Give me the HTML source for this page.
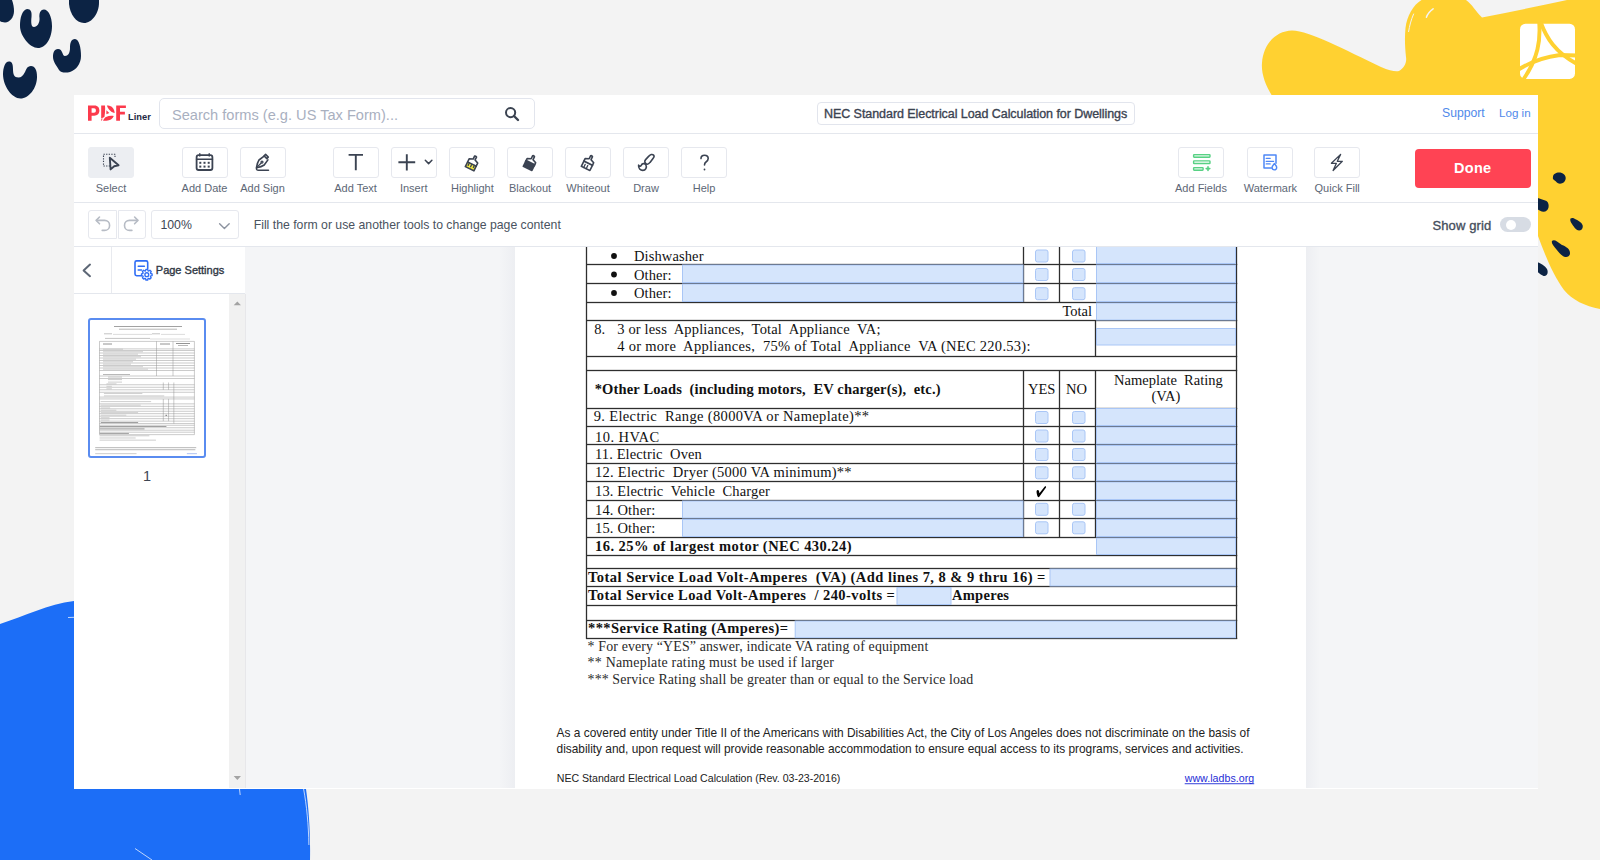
<!DOCTYPE html>
<html><head><meta charset="utf-8">
<style>
*{box-sizing:border-box;margin:0;padding:0}
html,body{width:1600px;height:860px;overflow:hidden;background:#f3f3f3;font-family:"Liberation Sans",sans-serif}
.abs{position:absolute}
#bg{position:absolute;left:0;top:0;width:1600px;height:860px}
#panel{position:absolute;left:74px;top:95px;width:1464px;height:694px;background:#fff;overflow:hidden}
.hline{position:absolute;height:1px;background:#e4e7ed}
.vline{position:absolute;width:1px;background:#e4e7ed}
.tb{position:absolute;top:52px;width:46px;height:31px;border:1px solid #e6e8ee;border-radius:3px;background:#fff}
.tb.sel{background:#eceef2;border-color:#eceef2}
.lbl{position:absolute;top:86px;font-size:11px;color:#5d6776;white-space:nowrap;text-align:center;line-height:14px}
.tb svg{position:absolute;left:0;top:0}
</style></head>
<body>
<!-- background blobs -->
<svg id="bg" width="1600" height="860" viewBox="0 0 1600 860">
  <g fill="#0c2344">
    <path d="M0,0 L12,0 C13.5,4 14,8 14,11 C14,17 10,22.4 5,22.4 C3,22.4 1,22 0,21 Z"/>
    <path d="M27,9 C22,10 20,18 20,26 C20,36 30,48 38,48 C46,48 52,38 52,26 C52,16 48,9.5 44,9.5 C40,9.5 39,14 39.5,18 C40,23 37,27 34,27 C31,27 31,22 31.5,17 C32,12 31,9 27,9 Z"/>
    <path d="M69,0 L69,4 C70,14 76,23 84,23 C92,23 99,13 99,3 L99,0 Z"/>
    <path d="M58,49 C54,49 53,53 53,57 C53,62 57,66 59,70 C61,73 66,73 70,72 C76,70 81,64 81,56 C81,48 79,39 75,39 C71,39 70,43 70,48 C70,53 68,56 65,56 C62,56 63,49 58,49 Z"/>
    <path d="M9,61.5 C5,61.5 3,68 3,74 C3,86 12,98.5 20.5,98.5 C29,98.5 37,88 37,77 C37,70 35,66 31,66 C27,66 26,70 25,72 C23,76 21,77.5 18.5,77.5 C14,77.5 13,74 13,69 C13,64 12,61.5 9,61.5 Z"/>
  </g>
  <!-- yellow blob -->
  <path fill="#ffd131" d="M1275,100 C1266,88 1261,74 1262,63 C1263,45 1275,31 1292,30.5 C1310,31 1345,50 1381,67 C1390,71 1396,72 1399,71 C1404,68 1407,63 1406,57 C1405,47 1404.5,38 1405.5,28 C1407,16 1413,5 1421.5,0 L1466,0 C1472,4 1476,12 1482,17.5 C1510,12 1540,6 1567,0 L1600,0 L1600,309 C1585,306 1572,300 1564,290 C1553,275 1545,255 1538,236 L1538,100 Z"/>
  <g fill="#0c2344">
    <path d="M1553,177 C1553,174 1556,172.4 1559,172.4 C1563,172.4 1565.7,175 1565.7,178 C1565.7,181.5 1563,183.7 1560,183.7 C1557,183.7 1556,181 1554,180 C1552.7,179 1552.7,178 1553,177 Z"/>
    <path d="M1536,197.5 C1541,199 1544,200 1546.5,201 C1548.5,202.5 1549,205 1548.5,207.5 C1548,210 1546,211.8 1543.5,211.8 C1541,211.8 1539.5,210 1536,209 Z"/>
    <path d="M1570.5,218.5 C1572,217.5 1574,218 1576,219.5 C1579,221 1582.5,223 1582.8,226 C1583,229 1581,230.5 1579,230.5 C1576.5,230.5 1574,227 1572,224 C1570.5,222 1569.8,220 1570.5,218.5 Z"/>
    <path d="M1552,241 C1553,239.8 1555,240 1557,241.5 L1562,245 C1566,246.5 1570,249 1570,253 C1570,256 1568,257.2 1565.5,257 C1562,256.5 1559.5,253 1556.5,249.5 C1554,246.5 1551,243 1552,241 Z"/>
    <path d="M1536,261.5 C1541,263 1545,266 1547,269 C1548.5,272 1547.5,276 1544.5,276 C1542,276 1540,273.5 1536,271 Z"/>
  </g>
  <!-- logo white square -->
  <rect x="1520" y="23.7" width="55" height="55.2" rx="5.5" fill="#fff"/>
  <g fill="none" stroke="#ffd131" stroke-width="3.9">
    <path d="M1539.2,22 C1540.6,40 1538.4,58 1523,80"/>
    <path d="M1540.6,22 C1546.4,38 1555,52 1577,64"/>
    <path d="M1518,70 C1530,62 1545,57 1560,55 L1577,55.5"/>
  </g>
  <!-- blue blob -->
  <path fill="#1c6ef7" d="M0,624 C25,616 48,604 74,601 L300,601 L306,789 C309,810 310.5,835 310,860 L0,860 Z"/>
  <g stroke="#fff" stroke-width="0.8" fill="none" opacity="0.9">
    <path d="M68,617.5 L74,617.3"/>
    <path d="M135,848.5 L152,860"/>
    <path d="M303.6,789 C306.6,805 308.6,825 308.9,845"/>
    <path d="M239.5,789 L240.2,795"/>
  </g>
  <g stroke="#f3f3f3" fill="none" stroke-linecap="round">
    <path d="M1413.6,14 C1411,20 1409.5,26 1408.6,31.6" stroke-width="1"/>
    <path d="M1433.1,8.8 C1430,11 1427.5,14 1426.4,17.2" stroke-width="1.5"/>
  </g>
</svg>

<div id="panel">
  <!-- header -->
  <div class="hline" style="left:0;top:38px;width:1464px"></div>
  <div class="hline" style="left:0;top:107px;width:1464px"></div>
  <div class="hline" style="left:0;top:151px;width:1464px"></div>
  <!-- search -->
  <div class="abs" style="left:85px;top:3px;width:376px;height:31px;border:1px solid #e2e5ed;border-radius:5px"></div>
  <div class="abs" style="left:98px;top:10.5px;font-size:14.6px;color:#a9b0bf;white-space:nowrap;line-height:18px">Search forms (e.g. US Tax Form)...</div>
  <svg class="abs" style="left:430px;top:11px" width="16" height="16" viewBox="0 0 16 16"><circle cx="6.6" cy="6.6" r="4.6" fill="none" stroke="#3b4351" stroke-width="2"/><path d="M10,10 L14,14" stroke="#3b4351" stroke-width="2.4" stroke-linecap="round"/></svg>
  <!-- title -->
  <div class="abs" style="left:743px;top:7px;width:318px;height:23px;border:1px solid #e2e5ed;border-radius:4px"></div>
  <div class="abs" style="left:750px;top:12px;font-size:12.5px;color:#3b4351;white-space:nowrap;line-height:14px;letter-spacing:-0.06px;-webkit-text-stroke:0.35px #3b4351">NEC Standard Electrical Load Calculation for Dwellings</div>
  <div class="abs" style="left:1368px;top:11.2px;font-size:12.2px;color:#5089ea;white-space:nowrap;line-height:14px">Support</div>
  <div class="abs" style="left:1425px;top:11.2px;font-size:11.6px;color:#5089ea;white-space:nowrap;line-height:14px">Log in</div>
  <!-- sidebar -->
  <div class="vline" style="left:36.6px;top:152px;height:46px;background:#e8eaef"></div>
  <div class="hline" style="left:0;top:198px;width:172px"></div>
  <div class="abs" style="left:155.3px;top:199px;width:16.2px;height:494px;background:#f1f1f1"></div>
  <div class="abs" style="left:81.8px;top:168.3px;font-size:11px;color:#2f3744;line-height:14px;white-space:nowrap;letter-spacing:0px;-webkit-text-stroke:0.35px #2f3744">Page Settings</div>
  <div class="abs" style="left:14px;top:222.8px;width:118px;height:140.6px;border:2px solid #5a8cf0;border-radius:3px;background:#fff"></div>
  <div class="abs" style="left:66px;top:373px;width:14px;text-align:center;font-size:14.5px;color:#3d4553;line-height:16px">1</div>
  <!-- doc area -->
  <div class="abs" style="left:171px;top:152px;width:1293px;height:540.5px;background:#f4f5f7"></div>
  <div class="abs" style="left:425px;top:152px;width:16px;height:540.5px;background:linear-gradient(to right,rgba(228,230,236,0),rgba(228,230,236,0.45))"></div>
  <div class="abs" style="left:1232px;top:152px;width:14px;height:540.5px;background:linear-gradient(to left,rgba(228,230,236,0),rgba(228,230,236,0.45))"></div>
  <div class="abs" style="left:441px;top:152px;width:791px;height:540.5px;background:#fff"></div>
  <div class="abs" style="left:171px;top:199px;width:1px;height:494px;background:#e7e7ea"></div>
  <!-- toolbar -->
  <div class="tb sel" style="left:14px"></div>
  <div class="lbl" style="left:-6px;width:86px">Select</div>
  <div class="tb" style="left:107.5px"></div>
  <div class="lbl" style="left:87.5px;width:86px">Add Date</div>
  <div class="tb" style="left:165.5px"></div>
  <div class="lbl" style="left:145.5px;width:86px">Add Sign</div>
  <div class="tb" style="left:258.6px"></div>
  <div class="lbl" style="left:238.60000000000002px;width:86px">Add Text</div>
  <div class="tb" style="left:316.7px"></div>
  <div class="lbl" style="left:296.7px;width:86px">Insert</div>
  <div class="tb" style="left:375.4px"></div>
  <div class="lbl" style="left:355.4px;width:86px">Highlight</div>
  <div class="tb" style="left:433px"></div>
  <div class="lbl" style="left:413px;width:86px">Blackout</div>
  <div class="tb" style="left:491px"></div>
  <div class="lbl" style="left:471px;width:86px">Whiteout</div>
  <div class="tb" style="left:549px"></div>
  <div class="lbl" style="left:529px;width:86px">Draw</div>
  <div class="tb" style="left:607px"></div>
  <div class="lbl" style="left:587px;width:86px">Help</div>
  <div class="tb" style="left:1104px"></div>
  <div class="lbl" style="left:1084px;width:86px">Add Fields</div>
  <div class="tb" style="left:1173.4px"></div>
  <div class="lbl" style="left:1153.4px;width:86px">Watermark</div>
  <div class="tb" style="left:1240.2px"></div>
  <div class="lbl" style="left:1220.2px;width:86px">Quick Fill</div>
  <div class="abs" style="left:1340.5px;top:54px;width:116.5px;height:38.5px;background:#ff4354;border-radius:4px;color:#fff;font-weight:bold;font-size:14.5px;line-height:38px;text-align:center;letter-spacing:0.3px">Done</div>
  <!-- subtoolbar -->
  <div class="abs" style="left:14.4px;top:115.3px;width:29px;height:29px;border:1px solid #e6e8ee;border-radius:3px 0 0 3px"></div>
  <div class="abs" style="left:43.5px;top:115.3px;width:28.5px;height:29px;border:1px solid #e6e8ee;border-radius:0 3px 3px 0"></div>
  <div class="abs" style="left:77.3px;top:115.3px;width:87.5px;height:29px;border:1px solid #e6e8ee;border-radius:3px"></div>
  <div class="abs" style="left:86.4px;top:123px;font-size:12.3px;color:#3d4553;line-height:14px">100%</div>
  <div class="abs" style="left:179.7px;top:123px;font-size:12.25px;color:#4a5360;line-height:14px;white-space:nowrap">Fill the form or use another tools to change page content</div>
  <div class="abs" style="left:1358.5px;top:124.3px;font-size:13px;color:#454e5c;line-height:14px;white-space:nowrap;letter-spacing:0.1px;-webkit-text-stroke:0.35px #454e5c">Show grid</div>
  <div class="abs" style="left:1425.7px;top:122.4px;width:31px;height:15px;border-radius:8px;background:#d7dce4"></div>
  <div class="abs" style="left:1431.5px;top:124.7px;width:10.5px;height:10.5px;border-radius:6px;background:#fff"></div>

</div>
<svg id="thumb" class="abs" style="left:0;top:0;pointer-events:none" width="1600" height="860" viewBox="0 0 1600 860"><g fill="none"><path d="M114.00,326.50 H182.00" stroke="#8a8a8a" stroke-width="0.8"/><path d="M119.00,329.20 H177.00" stroke="#9a9a9a" stroke-width="0.7"/><path d="M104.00,333.80 H112.00" stroke="#aaa" stroke-width="0.7"/><path d="M113.00,334.40 H152.00" stroke="#aaa" stroke-width="0.4"/><path d="M152.00,333.80 H160.00" stroke="#aaa" stroke-width="0.7"/><path d="M161.00,334.40 H185.00" stroke="#aaa" stroke-width="0.4"/><path d="M105.00,338.40 H150.00" stroke="#aaa" stroke-width="0.7"/><path d="M150.00,339.00 H190.00" stroke="#aaa" stroke-width="0.4"/><path d="M99.50,341.40 V434.63" stroke="#8a8a8a" stroke-width="0.45"/><path d="M194.41,341.40 V434.63" stroke="#8a8a8a" stroke-width="0.45"/><path d="M99.50,341.40 H194.41" stroke="#8a8a8a" stroke-width="0.45"/><path d="M99.50,348.90 H194.41" stroke="#8a8a8a" stroke-width="0.45"/><path d="M99.50,350.50 H194.41" stroke="#8a8a8a" stroke-width="0.45"/><path d="M99.50,353.00 H194.41" stroke="#8a8a8a" stroke-width="0.45"/><path d="M99.50,355.50 H194.41" stroke="#8a8a8a" stroke-width="0.45"/><path d="M99.50,358.00 H194.41" stroke="#8a8a8a" stroke-width="0.45"/><path d="M99.50,360.50 H194.41" stroke="#8a8a8a" stroke-width="0.45"/><path d="M99.50,363.00 H194.41" stroke="#8a8a8a" stroke-width="0.45"/><path d="M99.50,365.50 H194.41" stroke="#8a8a8a" stroke-width="0.45"/><path d="M99.50,368.00 H194.41" stroke="#8a8a8a" stroke-width="0.45"/><path d="M99.50,370.50 H194.41" stroke="#8a8a8a" stroke-width="0.45"/><path d="M99.50,376.00 H194.41" stroke="#8a8a8a" stroke-width="0.45"/><path d="M99.50,378.50 H194.41" stroke="#8a8a8a" stroke-width="0.45"/><path d="M156.50,341.40 V376.00" stroke="#8a8a8a" stroke-width="0.45"/><path d="M173.00,341.40 V376.00" stroke="#8a8a8a" stroke-width="0.45"/><path d="M103.00,344.00 H112.00" stroke="#777" stroke-width="0.8"/><path d="M160.00,344.00 H170.00" stroke="#777" stroke-width="0.8"/><path d="M176.00,343.50 H190.00" stroke="#777" stroke-width="0.8"/><path d="M178.00,345.50 H188.00" stroke="#888" stroke-width="0.6"/><path d="M103.00,349.20 H123.00" stroke="#b4b4b4" stroke-width="0.6"/><path d="M103.00,351.70 H143.00" stroke="#b4b4b4" stroke-width="0.6"/><path d="M103.00,354.20 H138.00" stroke="#b4b4b4" stroke-width="0.6"/><path d="M103.00,356.70 H141.00" stroke="#b4b4b4" stroke-width="0.6"/><path d="M103.00,359.20 H136.00" stroke="#b4b4b4" stroke-width="0.6"/><path d="M103.00,361.70 H133.00" stroke="#b4b4b4" stroke-width="0.6"/><path d="M103.00,364.20 H131.00" stroke="#b4b4b4" stroke-width="0.6"/><path d="M103.00,366.70 H143.00" stroke="#b4b4b4" stroke-width="0.6"/><path d="M103.00,369.20 H148.00" stroke="#b4b4b4" stroke-width="0.6"/><path d="M103.00,374.50 H130.00" stroke="#999" stroke-width="0.7"/><path d="M108.00,377.10 H122.00" stroke="#aaa" stroke-width="0.6"/><path d="M108.00,379.60 H122.00" stroke="#aaa" stroke-width="0.6"/><path d="M108.00,382.10 H122.00" stroke="#aaa" stroke-width="0.6"/><path d="M99.50,384.75 H194.41" stroke="#8a8a8a" stroke-width="0.45"/><path d="M99.50,387.28 H194.41" stroke="#8a8a8a" stroke-width="0.45"/><path d="M99.50,389.81 H194.41" stroke="#8a8a8a" stroke-width="0.45"/><path d="M99.50,392.28 H194.41" stroke="#8a8a8a" stroke-width="0.45"/><path d="M99.50,397.08 H194.41" stroke="#8a8a8a" stroke-width="0.45"/><path d="M99.50,398.94 H194.41" stroke="#8a8a8a" stroke-width="0.45"/><path d="M99.50,403.87 H194.41" stroke="#8a8a8a" stroke-width="0.45"/><path d="M99.50,406.34 H194.41" stroke="#8a8a8a" stroke-width="0.45"/><path d="M99.50,408.81 H194.41" stroke="#8a8a8a" stroke-width="0.45"/><path d="M99.50,411.27 H194.41" stroke="#8a8a8a" stroke-width="0.45"/><path d="M99.50,413.67 H194.41" stroke="#8a8a8a" stroke-width="0.45"/><path d="M99.50,416.20 H194.41" stroke="#8a8a8a" stroke-width="0.45"/><path d="M99.50,418.67 H194.41" stroke="#8a8a8a" stroke-width="0.45"/><path d="M99.50,421.14 H194.41" stroke="#8a8a8a" stroke-width="0.45"/><path d="M99.50,423.54 H194.41" stroke="#8a8a8a" stroke-width="0.45"/><path d="M99.50,425.27 H194.41" stroke="#8a8a8a" stroke-width="0.45"/><path d="M99.50,427.74 H194.41" stroke="#8a8a8a" stroke-width="0.45"/><path d="M99.50,430.20 H194.41" stroke="#8a8a8a" stroke-width="0.45"/><path d="M99.50,432.20 H194.41" stroke="#8a8a8a" stroke-width="0.45"/><path d="M99.50,434.63 H194.41" stroke="#8a8a8a" stroke-width="0.45"/><path d="M163.30,382.48 V389.81" stroke="#8a8a8a" stroke-width="0.45"/><path d="M163.30,398.94 V421.14" stroke="#8a8a8a" stroke-width="0.45"/><path d="M168.54,382.48 V389.81" stroke="#8a8a8a" stroke-width="0.45"/><path d="M168.54,398.94 V421.14" stroke="#8a8a8a" stroke-width="0.45"/><path d="M173.83,382.48 V423.54" stroke="#8a8a8a" stroke-width="0.45"/><path d="M106.44,383.85 H116.51" stroke="#b0b0b0" stroke-width="0.6"/><path d="M106.44,386.31 H111.84" stroke="#b0b0b0" stroke-width="0.6"/><path d="M106.44,388.78 H111.84" stroke="#b0b0b0" stroke-width="0.6"/><path d="M103.95,393.54 H142.35" stroke="#b0b0b0" stroke-width="0.6"/><path d="M103.95,395.88 H164.25" stroke="#b0b0b0" stroke-width="0.6"/><path d="M100.59,401.57 H151.11" stroke="#b0b0b0" stroke-width="0.6"/><path d="M100.59,405.17 H140.75" stroke="#b0b0b0" stroke-width="0.6"/><path d="M100.74,407.91 H110.08" stroke="#b0b0b0" stroke-width="0.6"/><path d="M100.74,410.24 H116.36" stroke="#b0b0b0" stroke-width="0.6"/><path d="M100.74,412.64 H138.12" stroke="#b0b0b0" stroke-width="0.6"/><path d="M100.74,415.17 H126.29" stroke="#b0b0b0" stroke-width="0.6"/><path d="M100.74,417.70 H109.50" stroke="#b0b0b0" stroke-width="0.6"/><path d="M100.74,420.04 H109.50" stroke="#b0b0b0" stroke-width="0.6"/><path d="M100.74,422.50 H138.12" stroke="#888" stroke-width="0.8"/><path d="M99.72,426.50 H166.44" stroke="#888" stroke-width="0.8"/><path d="M99.72,428.90 H144.54" stroke="#888" stroke-width="0.8"/><path d="M99.72,433.43 H128.92" stroke="#888" stroke-width="0.8"/><path d="M99.57,435.79 H149.36" stroke="#aaa" stroke-width="0.6"/><path d="M99.57,437.97 H135.63" stroke="#aaa" stroke-width="0.6"/><path d="M99.57,440.15 H155.93" stroke="#aaa" stroke-width="0.6"/><path d="M165.71,415.40 H166.59" stroke="#444" stroke-width="1.2"/><path d="M95.19,447.66 H196.22" stroke="#999" stroke-width="0.7"/><path d="M95.19,449.73 H195.35" stroke="#999" stroke-width="0.7"/><path d="M95.19,453.66 H136.51" stroke="#aaa" stroke-width="0.6"/><path d="M186.88,453.66 H196.95" stroke="#7a9ae8" stroke-width="0.6"/></g></svg>
<svg id="doc" class="abs" style="left:0;top:0;pointer-events:none" width="1600" height="860" viewBox="0 0 1600 860">
<defs><clipPath id="dclip"><rect x="515" y="247" width="791" height="541"/></clipPath></defs>
<g clip-path="url(#dclip)">
<rect x="586" y="263.85" width="651.20" height="1.3" fill="#2e2e2e"/>
<rect x="586" y="282.85" width="651.20" height="1.3" fill="#2e2e2e"/>
<rect x="586" y="301.85" width="651.20" height="1.3" fill="#2e2e2e"/>
<rect x="586" y="319.85" width="651.20" height="1.3" fill="#2e2e2e"/>
<rect x="586" y="355.85" width="651.20" height="1.3" fill="#2e2e2e"/>
<rect x="586" y="369.85" width="651.20" height="1.3" fill="#2e2e2e"/>
<rect x="586" y="407.85" width="651.20" height="1.3" fill="#2e2e2e"/>
<rect x="586" y="425.85" width="651.20" height="1.3" fill="#2e2e2e"/>
<rect x="586" y="443.85" width="651.20" height="1.3" fill="#2e2e2e"/>
<rect x="586" y="462.85" width="651.20" height="1.3" fill="#2e2e2e"/>
<rect x="586" y="480.85" width="651.20" height="1.3" fill="#2e2e2e"/>
<rect x="586" y="499.85" width="651.20" height="1.3" fill="#2e2e2e"/>
<rect x="586" y="517.85" width="651.20" height="1.3" fill="#2e2e2e"/>
<rect x="586" y="536.85" width="651.20" height="1.3" fill="#2e2e2e"/>
<rect x="586" y="554.85" width="651.20" height="1.3" fill="#2e2e2e"/>
<rect x="586" y="567.85" width="651.20" height="1.3" fill="#2e2e2e"/>
<rect x="586" y="585.85" width="651.20" height="1.3" fill="#2e2e2e"/>
<rect x="586" y="604.85" width="651.20" height="1.3" fill="#2e2e2e"/>
<rect x="586" y="619.85" width="651.20" height="1.3" fill="#2e2e2e"/>
<rect x="586" y="637.85" width="651.20" height="1.3" fill="#2e2e2e"/>
<rect x="585.85" y="240" width="1.3" height="398.80" fill="#2e2e2e"/>
<rect x="1235.85" y="240" width="1.3" height="398.80" fill="#2e2e2e"/>
<rect x="1022.85" y="240" width="1.3" height="62.50" fill="#2e2e2e"/>
<rect x="1022.85" y="370.5" width="1.3" height="167.00" fill="#2e2e2e"/>
<rect x="1058.85" y="240" width="1.3" height="62.50" fill="#2e2e2e"/>
<rect x="1058.85" y="370.5" width="1.3" height="167.00" fill="#2e2e2e"/>
<rect x="1094.85" y="320" width="1.3" height="36.80" fill="#2e2e2e"/>
<rect x="1094.85" y="370.5" width="1.3" height="167.00" fill="#2e2e2e"/>
<rect x="682.5" y="265.0" width="340.50" height="17.50" fill="#d5e5fc" stroke="#a9c6f6" stroke-width="1"/>
<rect x="682.5" y="284.0" width="340.50" height="17.50" fill="#d5e5fc" stroke="#a9c6f6" stroke-width="1"/>
<rect x="1096.5" y="240.5" width="139.00" height="23.00" fill="#d5e5fc" stroke="#a9c6f6" stroke-width="1"/>
<rect x="1096.5" y="265.0" width="139.00" height="17.50" fill="#d5e5fc" stroke="#a9c6f6" stroke-width="1"/>
<rect x="1096.5" y="284.0" width="139.00" height="17.50" fill="#d5e5fc" stroke="#a9c6f6" stroke-width="1"/>
<rect x="1096.5" y="303.0" width="139.00" height="17.00" fill="#d5e5fc" stroke="#a9c6f6" stroke-width="1"/>
<rect x="1096.5" y="328.5" width="139.00" height="16.50" fill="#d5e5fc" stroke="#a9c6f6" stroke-width="1"/>
<rect x="1096.5" y="408.5" width="139.00" height="17.00" fill="#d5e5fc" stroke="#a9c6f6" stroke-width="1"/>
<rect x="1096.5" y="427.0" width="139.00" height="17.00" fill="#d5e5fc" stroke="#a9c6f6" stroke-width="1"/>
<rect x="1096.5" y="445.5" width="139.00" height="17.00" fill="#d5e5fc" stroke="#a9c6f6" stroke-width="1"/>
<rect x="1096.5" y="464.0" width="139.00" height="16.50" fill="#d5e5fc" stroke="#a9c6f6" stroke-width="1"/>
<rect x="1096.5" y="482.0" width="139.00" height="17.50" fill="#d5e5fc" stroke="#a9c6f6" stroke-width="1"/>
<rect x="1096.5" y="501.0" width="139.00" height="17.00" fill="#d5e5fc" stroke="#a9c6f6" stroke-width="1"/>
<rect x="1096.5" y="519.5" width="139.00" height="17.00" fill="#d5e5fc" stroke="#a9c6f6" stroke-width="1"/>
<rect x="1096.5" y="538.0" width="139.00" height="16.50" fill="#d5e5fc" stroke="#a9c6f6" stroke-width="1"/>
<rect x="682.5" y="501.0" width="340.50" height="17.00" fill="#d5e5fc" stroke="#a9c6f6" stroke-width="1"/>
<rect x="682.5" y="519.5" width="340.50" height="17.00" fill="#d5e5fc" stroke="#a9c6f6" stroke-width="1"/>
<rect x="1050.0" y="569.0" width="185.50" height="17.00" fill="#d5e5fc" stroke="#a9c6f6" stroke-width="1"/>
<rect x="897.0" y="587.5" width="54.00" height="17.00" fill="#d5e5fc" stroke="#a9c6f6" stroke-width="1"/>
<rect x="795.2" y="621.0" width="440.30" height="16.70" fill="#d5e5fc" stroke="#a9c6f6" stroke-width="1"/>
<rect x="1035.5" y="250.0" width="12.5" height="12" rx="2" fill="#d5e5fc" stroke="#a9c6f6" stroke-width="1"/>
<rect x="1072.5" y="250.0" width="12.5" height="12" rx="2" fill="#d5e5fc" stroke="#a9c6f6" stroke-width="1"/>
<rect x="1035.5" y="268.5" width="12.5" height="12" rx="2" fill="#d5e5fc" stroke="#a9c6f6" stroke-width="1"/>
<rect x="1072.5" y="268.5" width="12.5" height="12" rx="2" fill="#d5e5fc" stroke="#a9c6f6" stroke-width="1"/>
<rect x="1035.5" y="287.7" width="12.5" height="12" rx="2" fill="#d5e5fc" stroke="#a9c6f6" stroke-width="1"/>
<rect x="1072.5" y="287.7" width="12.5" height="12" rx="2" fill="#d5e5fc" stroke="#a9c6f6" stroke-width="1"/>
<rect x="1035.5" y="411.5" width="12.5" height="12" rx="2" fill="#d5e5fc" stroke="#a9c6f6" stroke-width="1"/>
<rect x="1072.5" y="411.5" width="12.5" height="12" rx="2" fill="#d5e5fc" stroke="#a9c6f6" stroke-width="1"/>
<rect x="1035.5" y="430.0" width="12.5" height="12" rx="2" fill="#d5e5fc" stroke="#a9c6f6" stroke-width="1"/>
<rect x="1072.5" y="430.0" width="12.5" height="12" rx="2" fill="#d5e5fc" stroke="#a9c6f6" stroke-width="1"/>
<rect x="1035.5" y="448.5" width="12.5" height="12" rx="2" fill="#d5e5fc" stroke="#a9c6f6" stroke-width="1"/>
<rect x="1072.5" y="448.5" width="12.5" height="12" rx="2" fill="#d5e5fc" stroke="#a9c6f6" stroke-width="1"/>
<rect x="1035.5" y="466.8" width="12.5" height="12" rx="2" fill="#d5e5fc" stroke="#a9c6f6" stroke-width="1"/>
<rect x="1072.5" y="466.8" width="12.5" height="12" rx="2" fill="#d5e5fc" stroke="#a9c6f6" stroke-width="1"/>
<rect x="1035.5" y="503.3" width="12.5" height="12" rx="2" fill="#d5e5fc" stroke="#a9c6f6" stroke-width="1"/>
<rect x="1072.5" y="503.3" width="12.5" height="12" rx="2" fill="#d5e5fc" stroke="#a9c6f6" stroke-width="1"/>
<rect x="1035.5" y="521.8" width="12.5" height="12" rx="2" fill="#d5e5fc" stroke="#a9c6f6" stroke-width="1"/>
<rect x="1072.5" y="521.8" width="12.5" height="12" rx="2" fill="#d5e5fc" stroke="#a9c6f6" stroke-width="1"/>
<circle cx="614" cy="256" r="2.9" fill="#111"/>
<circle cx="614" cy="274.5" r="2.9" fill="#111"/>
<circle cx="614" cy="293" r="2.9" fill="#111"/>
<text x="634" y="261" font-family="Liberation Serif" font-size="14.5" fill="#111" textLength="69.5" lengthAdjust="spacing" style="white-space:pre">Dishwasher</text>
<text x="634" y="279.5" font-family="Liberation Serif" font-size="14.5" fill="#111" textLength="37.5" lengthAdjust="spacing" style="white-space:pre">Other:</text>
<text x="634" y="298" font-family="Liberation Serif" font-size="14.5" fill="#111" textLength="37.5" lengthAdjust="spacing" style="white-space:pre">Other:</text>
<text x="1062.5" y="315.7" font-family="Liberation Serif" font-size="14.5" fill="#111" textLength="29.5" lengthAdjust="spacing" style="white-space:pre">Total</text>
<text x="594.3" y="333.7" font-family="Liberation Serif" font-size="14.5" fill="#111" style="white-space:pre">8.</text>
<text x="617.2" y="333.7" font-family="Liberation Serif" font-size="14.5" fill="#111" textLength="263.3" lengthAdjust="spacing" style="white-space:pre">3 or less  Appliances,  Total  Appliance  VA;</text>
<text x="617.2" y="351.3" font-family="Liberation Serif" font-size="14.5" fill="#111" textLength="413.3" lengthAdjust="spacing" style="white-space:pre">4 or more  Appliances,  75% of Total  Appliance  VA (NEC 220.53):</text>
<text x="594.7" y="394.2" font-family="Liberation Serif" font-size="14.5" font-weight="bold" fill="#111" textLength="345.8" lengthAdjust="spacing" style="white-space:pre">*Other Loads  (including motors,  EV charger(s),  etc.)</text>
<text x="1028" y="393.8" font-family="Liberation Serif" font-size="14.5" fill="#111" style="white-space:pre">YES</text>
<text x="1066" y="393.8" font-family="Liberation Serif" font-size="14.5" fill="#111" style="white-space:pre">NO</text>
<text x="1114" y="385" font-family="Liberation Serif" font-size="14.5" fill="#111" textLength="108.8" lengthAdjust="spacing" style="white-space:pre">Nameplate  Rating</text>
<text x="1151.5" y="401.3" font-family="Liberation Serif" font-size="14.5" fill="#111" style="white-space:pre">(VA)</text>
<text x="593.7" y="421.25" font-family="Liberation Serif" font-size="14.5" fill="#111" textLength="275.3" lengthAdjust="spacing" style="white-space:pre">9. Electric  Range (8000VA or Nameplate)**</text>
<text x="595" y="441.5" font-family="Liberation Serif" font-size="14.5" fill="#111" textLength="64.2" lengthAdjust="spacing" style="white-space:pre">10. HVAC</text>
<text x="595" y="459.3" font-family="Liberation Serif" font-size="14.5" fill="#111" textLength="106.8" lengthAdjust="spacing" style="white-space:pre">11. Electric  Oven</text>
<text x="595" y="476.9" font-family="Liberation Serif" font-size="14.5" fill="#111" textLength="256.6" lengthAdjust="spacing" style="white-space:pre">12. Electric  Dryer (5000 VA minimum)**</text>
<text x="595" y="496.2" font-family="Liberation Serif" font-size="14.5" fill="#111" textLength="174.8" lengthAdjust="spacing" style="white-space:pre">13. Electric  Vehicle  Charger</text>
<text x="595" y="515" font-family="Liberation Serif" font-size="14.5" fill="#111" textLength="60.3" lengthAdjust="spacing" style="white-space:pre">14. Other:</text>
<text x="595" y="532.5" font-family="Liberation Serif" font-size="14.5" fill="#111" textLength="60.3" lengthAdjust="spacing" style="white-space:pre">15. Other:</text>
<text x="595" y="551.2" font-family="Liberation Serif" font-size="14.5" font-weight="bold" fill="#111" textLength="256.5" lengthAdjust="spacing" style="white-space:pre">16. 25% of largest motor (NEC 430.24)</text>
<text x="588" y="582" font-family="Liberation Serif" font-size="14.5" font-weight="bold" fill="#111" textLength="457.3" lengthAdjust="spacing" style="white-space:pre">Total Service Load Volt-Amperes  (VA) (Add lines 7, 8 &amp; 9 thru 16) =</text>
<text x="588" y="600" font-family="Liberation Serif" font-size="14.5" font-weight="bold" fill="#111" textLength="306.8" lengthAdjust="spacing" style="white-space:pre">Total Service Load Volt-Amperes  / 240-volts =</text>
<text x="952" y="600" font-family="Liberation Serif" font-size="14.5" font-weight="bold" fill="#111" textLength="57.0" lengthAdjust="spacing" style="white-space:pre">Amperes</text>
<text x="588" y="633.1" font-family="Liberation Serif" font-size="14.5" font-weight="bold" fill="#111" textLength="200.0" lengthAdjust="spacing" style="white-space:pre">***Service Rating (Amperes)=</text>
<text x="587.6" y="651" font-family="Liberation Serif" font-size="13.9" fill="#2a2a2a" textLength="340.7" lengthAdjust="spacing" style="white-space:pre">* For every “YES” answer, indicate VA rating of equipment</text>
<text x="587.6" y="667.2" font-family="Liberation Serif" font-size="13.9" fill="#2a2a2a" textLength="246.4" lengthAdjust="spacing" style="white-space:pre">** Nameplate rating must be used if larger</text>
<text x="587.6" y="683.7" font-family="Liberation Serif" font-size="13.9" fill="#2a2a2a" textLength="385.7" lengthAdjust="spacing" style="white-space:pre">*** Service Rating shall be greater than or equal to the Service load</text>
<text x="556.6" y="737.2" font-family="Liberation Sans" font-size="11.9" fill="#222" textLength="692.9" lengthAdjust="spacing" style="white-space:pre">As a covered entity under Title II of the Americans with Disabilities Act, the City of Los Angeles does not discriminate on the basis of</text>
<text x="556.6" y="752.6" font-family="Liberation Sans" font-size="11.9" fill="#222" textLength="687.0" lengthAdjust="spacing" style="white-space:pre">disability and, upon request will provide reasonable accommodation to ensure equal access to its programs, services and activities.</text>
<text x="556.8" y="782" font-family="Liberation Sans" font-size="10.6" fill="#222" textLength="283.5" lengthAdjust="spacing" style="white-space:pre">NEC Standard Electrical Load Calculation (Rev. 03-23-2016)</text>
<text x="1184.7" y="782" font-family="Liberation Sans" font-size="10.6" fill="#1d2bd6" textLength="69.5" lengthAdjust="spacing" style="white-space:pre">www.ladbs.org</text>
<rect x="1184.7" y="783.3" width="69.5" height="0.9" fill="#1d2bd6"/>
<path d="M1036.6,491 C1037,489.6 1038.6,489.6 1039,491 L1039.4,493.3 L1044.8,486.6 C1045.4,486 1046.4,486.6 1046,487.5 L1039.3,496.8 C1038.9,497.3 1038,497.3 1037.8,496.8 C1037,495 1036.4,492.8 1036.6,491 Z" fill="#000"/>
</g>
</svg>
<svg id="fg" class="abs" style="left:0;top:0;pointer-events:none" width="1600" height="860" viewBox="0 0 1600 860">
 <g id="icons" fill="none" stroke="#3b4352" stroke-width="1.7" stroke-linecap="round" stroke-linejoin="round">
  <!-- select -->
  <path d="M110,166 H103.5 V154.3 H115 V157" stroke-dasharray="1.3 1.3" stroke-width="1.1" stroke-linecap="butt"/>
  <path d="M109.8,157.8 L118.6,165.2 L114.2,166.2 L110.6,169.4 Z" stroke-width="1.9"/>
  <!-- calendar -->
  <rect x="196.6" y="155.2" width="15.8" height="14.8" rx="2" stroke-width="1.8"/>
  <path d="M196.6,159.3 H212.4" stroke-width="1.6"/>
  <path d="M199.8,153.8 V156 M209.2,153.8 V156" stroke-width="1.4"/>
  <g fill="#3b4352" stroke="none">
   <rect x="199.3" y="161.8" width="2" height="2"/><rect x="203.5" y="161.8" width="2" height="2"/><rect x="207.7" y="161.8" width="2" height="2"/>
   <rect x="199.3" y="165.6" width="2" height="2"/><rect x="203.5" y="165.6" width="2" height="2"/><rect x="207.7" y="165.6" width="2" height="2"/>
  </g>
  <!-- pen -->
  <path d="M265.6,154.4 L268.3,157.1 L266.8,158.6 L264.1,155.9 Z" stroke-width="1.5"/>
  <path d="M264.1,156.2 L259,160 C257.6,162 257,164.5 256.4,167.8 C259.6,167.2 262.2,166.4 264.2,165 L267.9,159.9" stroke-width="1.6"/>
  <path d="M256.8,167.4 L261.2,163" stroke-width="1.2"/>
  <circle cx="262" cy="162.1" r="1" stroke-width="1.2"/>
  <path d="M256.6,168.2 C256.2,169.6 257,170.2 258.5,170.2 H268.5" stroke-width="1.5"/>
  <!-- T -->
  <path d="M348.6,154.9 H363 M355.8,154.9 V170.2" stroke-width="1.9" stroke-linecap="butt"/>
  <!-- plus + chevron -->
  <path d="M398.4,162.3 H415.2 M406.8,154.2 V170.4" stroke-width="1.9" stroke-linecap="butt"/>
  <path d="M425.3,160.3 L428.6,163.6 L431.9,160.3" stroke-width="1.5"/>
  <!-- highlight brush -->
  <g transform="translate(472.6,162.6) rotate(26) scale(0.82)">
   <path d="M-5.8,2 L5.8,2 L5.8,8.3 L-5.8,8.3 Z" fill="#f4ea3f" stroke-width="2"/>
   <path d="M-3.4,2.2 V5.4 M0,2.2 V5.6 M3.4,2.2 V5" stroke-width="1.6"/>
   <path d="M-5.8,2 V-2.2 L-1.3,-4.2 V-8.2 A1.9,1.9 0 0 1 1.3,-8.2 V-4.2 L5.8,-2.2 V2" stroke-width="2"/>
  </g>
  <!-- blackout brush -->
  <g transform="translate(530.6,162.3) rotate(26) scale(0.82)">
   <path d="M-5.8,0.5 L5.8,0.5 L5.8,8.3 L-5.8,8.3 Z" fill="#3b4352" stroke-width="2"/>
   <path d="M-5.8,2 V-2.2 L-1.3,-4.2 V-8.2 A1.9,1.9 0 0 1 1.3,-8.2 V-4.2 L5.8,-2.2 V2" stroke-width="2"/>
  </g>
  <!-- whiteout brush -->
  <g transform="translate(588.6,162.3) rotate(26) scale(0.82)">
   <path d="M-5.8,1.2 L5.8,1.2 L5.8,8.3 L-5.8,8.3 Z" stroke-width="2"/>
   <path d="M-2.6,4 V8.3 M0.8,4 V8.3" stroke-width="1.6"/>
   <path d="M-5.8,1.2 V-2.2 L-1.3,-4.2 V-8.2 A1.9,1.9 0 0 1 1.3,-8.2 V-4.2 L5.8,-2.2 V1.2" stroke-width="2"/>
  </g>
  <!-- draw brush -->
  <path d="M653.8,155.4 C652.2,153.6 650.4,154.6 648.6,156.4 L645.6,159.6 C644.2,161.2 644.6,163 646.4,164 C647.8,164.6 649,163.8 650,162.4 L653,158.4 C654.2,157 654.6,156.4 653.8,155.4 Z" stroke-width="1.6"/>
  <path d="M645.8,164.6 C644.6,163 641.8,163.4 641.2,165.4 C640.6,166.6 639.6,166.6 638.6,165.2 C638.2,168.4 640.4,170.4 642.8,170.4 C645.6,170.4 647.2,167.4 645.8,164.6 Z" stroke-width="1.6"/>
  <!-- help -->
  <path d="M701,158.6 C701,156.4 702.6,155.2 704.5,155.2 C706.6,155.2 708.2,156.6 708.2,158.6 C708.2,160.4 707.2,161.2 706,162 C704.9,162.7 704.5,163.4 704.5,165" stroke-width="1.6"/>
  <circle cx="704.5" cy="169.5" r="0.9" fill="#3b4352" stroke="none"/>
  <!-- add fields -->
  <g stroke="#58d184" stroke-width="1.4">
   <rect x="1193.6" y="154.6" width="16.4" height="2.6" rx="0.6" fill="#dcf6e6"/>
   <rect x="1193.6" y="160.9" width="16.4" height="2.6" rx="0.6"/>
   <rect x="1193.6" y="167.6" width="9.5" height="2.6" rx="0.6" fill="#dcf6e6"/>
   <path d="M1206.2,168.6 H1209.8 M1208,166.8 V170.4" stroke-width="1.6"/>
  </g>
  <!-- watermark -->
  <g stroke="#4f88f6" stroke-width="1.5">
   <path d="M1276,163.2 V154.9 H1264 V168 H1271.4"/>
   <path d="M1266.2,158.4 H1270.2 M1266.2,161.4 H1273.6 M1266.2,163.9 H1270.2" stroke-width="1.2"/>
   <path d="M1274.4,163.6 C1273.2,165 1272.1,166.2 1272.1,167.6 A2.3,2.3 0 0 0 1276.7,167.6 C1276.7,166.2 1275.6,165 1274.4,163.6 Z" fill="#fff" stroke-width="1.4"/>
  </g>
  <!-- quick fill -->
  <path d="M1340.6,154.4 L1331.4,163.3 L1336.4,163.3 L1333.1,170.5 L1342.3,161.3 L1337.3,161.3 Z" stroke-width="1.3"/>
  <!-- search done in header -->
  <!-- undo / redo -->
  <g stroke="#b7bcc5" stroke-width="1.6">
   <path d="M99.5,217 L96.2,220.4 L99.5,223.8"/>
   <path d="M96.5,220.4 H104.6 C107.6,220.4 109.6,222.6 109.6,225.4 C109.6,228.2 107.4,230.4 104.6,230.4 H102.2"/>
   <path d="M134.6,217 L137.9,220.4 L134.6,223.8"/>
   <path d="M137.6,220.4 H129.5 C126.5,220.4 124.5,222.6 124.5,225.4 C124.5,228.2 126.7,230.4 129.5,230.4 H131.9"/>
  </g>
  <path d="M219.6,223.8 L224.4,228.6 L229.2,223.8" stroke="#8d94a0" stroke-width="1.4"/>
  <!-- logo -->
  <g fill="#fc3a4c" stroke="none">
   <path d="M88,105.4 H94.5 C98,105.4 99.4,107.8 99.4,110.6 C99.4,113.6 97.6,115.8 94.2,115.8 H91.6 V120.7 H88 Z M91.6,108.3 V112.8 H94 C95.2,112.8 95.9,112 95.9,110.55 C95.9,109.1 95.2,108.3 94,108.3 Z"/>
   <path d="M101.2,105.4 H105 C105.3,109 105.1,113 104.4,116.9 L101.2,118.4 Z"/>
   <path d="M101.3,119 L102.6,118.2 L101.9,120.7 H101.3 Z"/>
   <path d="M106.9,105.4 H108 C111.8,105.6 114.3,108.7 114.7,112.9 C111.8,112.6 108.4,110 106.9,105.4 Z"/>
   <path d="M106.4,110.2 L109.3,113.1 L106.4,114.2 Z"/>
   <path d="M103,120.7 C103.9,118.8 104.8,117.5 106,116.9 C108.5,116 111,115.4 113.8,116.1 C112.6,119.2 109.8,120.7 106.5,120.7 Z"/>
   <path d="M116.2,105.4 H125.9 V108.1 H120 V111.7 H124.9 V114.4 H120 V120.7 H116.2 Z"/>
  </g>
  <text x="128" y="120.4" font-family="Liberation Sans" font-weight="bold" font-size="9.8" fill="#1f2a44" stroke="none" textLength="22.8" lengthAdjust="spacingAndGlyphs">Liner</text>
  <!-- sidebar icons -->
  <path d="M90,264.6 L83.6,270.4 L90,276.2" stroke="#5d6776" stroke-width="2"/>
  <g stroke="#2f6df5" stroke-width="1.6">
   <path d="M141.6,275.7 H136.6 C135.7,275.7 135,275 135,274.1 V262.5 C135,261.6 135.7,260.9 136.6,260.9 H146.1 C147,260.9 147.7,261.6 147.7,262.5 V268.6"/>
   <path d="M138.2,266.3 H144.4 M138.2,270 H141.6" stroke-width="1.5"/>
   <path d="M150.72,273.49 L152.12,273.79 L152.12,275.61 L150.72,275.91 L150.43,276.61 L151.21,277.82 L149.92,279.11 L148.71,278.33 L148.01,278.62 L147.71,280.02 L145.89,280.02 L145.59,278.62 L144.89,278.33 L143.68,279.11 L142.39,277.82 L143.17,276.61 L142.88,275.91 L141.48,275.61 L141.48,273.79 L142.88,273.49 L143.17,272.79 L142.39,271.58 L143.68,270.29 L144.89,271.07 L145.59,270.78 L145.89,269.38 L147.71,269.38 L148.01,270.78 L148.71,271.07 L149.92,270.29 L151.21,271.58 L150.43,272.79 Z" fill="#fff" stroke-width="1.3"/>
   <circle cx="146.8" cy="274.7" r="1.9" stroke-width="1.4"/>
  </g>
  <path d="M233.7,305.3 L237.35,301.4 L241,305.3 Z M233.7,776 L237.35,779.9 L241,776 Z" fill="#a3a3a3" stroke="none"/>
 </g>
</svg>
</body></html>
